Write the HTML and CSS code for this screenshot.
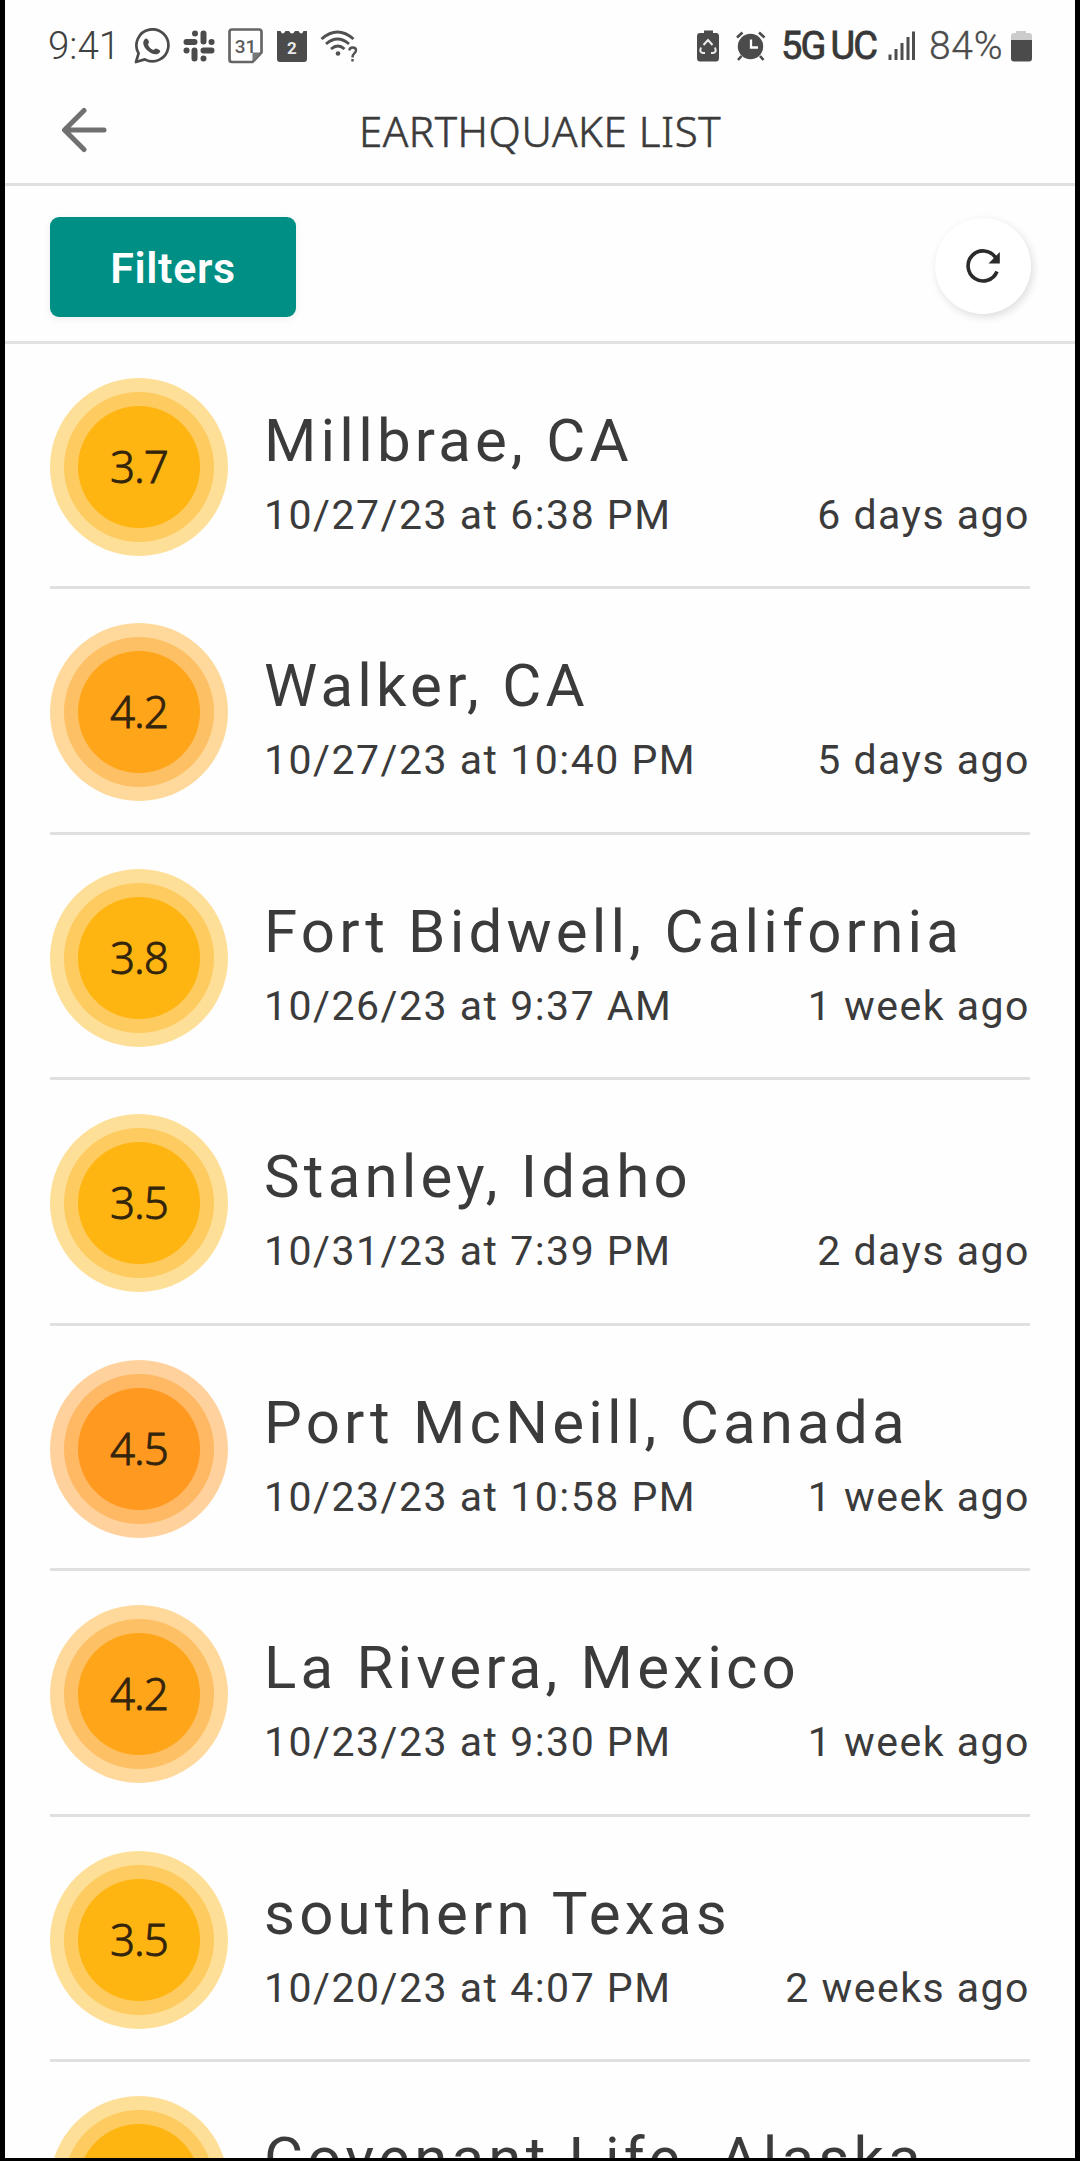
FILE: index.html
```html
<!DOCTYPE html>
<html lang="en">
<head>
<meta charset="utf-8">
<title>Earthquake List</title>
<link rel="stylesheet" href="styles.css">
</head>
<body>
<main class="screen">
  <div class="status">
    <div class="status-left">
      <span class="clock">9:41</span>
      <svg width="36" height="36" viewBox="134 28 36 36" fill="none" stroke="#4b4b4b" stroke-width="2.7"><path d="M136 62l2.6-8.6a16 16 0 1 1 6.2 6z" stroke-linejoin="round"/><path d="M144.500 39.500c1.500-2 3.500-1 4.500 2.500l-1 2.500c1 3 3 4.500 5.500 5.500l2-1.500c3 .5 5.500 2 4.500 3.500-2.500 4-8.500 2.500-12.500-1.500-4-3.500-5.500-8-3-11z" fill="#4b4b4b" stroke="none"/></svg>
      <svg width="32" height="32" viewBox="183 30 32 32" fill="none" stroke="#4b4b4b" stroke-width="6" stroke-linecap="round"><path d="M203.500 33.500v8M186.500 42h8M211.500 50.500h-8M194.500 50.500v8M195 33.500v.1M211.500 42h.1M186.500 50.500h.1M203.500 58.500v.1"/></svg>
      <svg width="35" height="36" viewBox="228 28 35 36"><path d="M232 29.500h27q2.500 0 2.500 2.500v20.500l-9 9.500h-20.500q-2.500 0-2.500-2.500V32q0-2.500 2.500-2.500z" fill="none" stroke="#666" stroke-width="2.700"/><path d="M261 52.500h-8.500v9.500" fill="#777"/><text x="245.500" y="53" class="cal-day">31</text></svg>
      <svg class="cal" width="30" height="32" viewBox="277 30 30 32"><path d="M277 31h3.500q2 5 5 0h3.500q3 5 6 0h3.500q3 5 5 0h3.500v28q0 3-3 3h-24q-3 0-3-3z" fill="#4b4b4b"/><text x="292" y="54" class="cal-number">2</text></svg>
      <svg width="38" height="34" viewBox="320 29 38 34" fill="none" stroke="#505050" stroke-width="2.900"><path d="M321.500 39q16-14 32 0M326 44q11.500-10 23 0M331 49q7-6 13.500 0"/><circle cx="338" cy="53.500" r="2.300" fill="#505050" stroke="none"/><path d="M349.500 50.500c0-4 6.500-4 6.500 0 0 3-3.500 2.500-3.500 7M352.500 59v2.500" stroke-width="2.400"/></svg>
    </div>
    <div class="status-right">
      <svg class="saver" width="22" height="32" viewBox="697 30 22 32"><path d="M704 30.500h9v2.500h3q3 0 3 3v22q0 3.500-3 3.500h-16q-3 0-3-3.500V36q0-3 3-3h4z" fill="#4b4b4b"/><path d="M703.500 45l4.500-5 4.500 5M701 47.500q-2 5 2 5.500h2M715 47.500q2 5-2 5.500h-2" fill="none" stroke="#eee" stroke-width="2"/></svg>
      <svg class="alarm" width="30" height="30" viewBox="736 31 30 30"><circle cx="750.500" cy="46.500" r="12.700" fill="#4b4b4b"/><path d="M737 37.500l5.500-5M764.500 37.500l-5.500-5M741.500 56l-3.500 4M760 56l3.500 4" stroke="#4b4b4b" stroke-width="2.600"/><path d="M751 39.500v8h7" fill="none" stroke="#fff" stroke-width="2.300"/></svg>
      <span class="network">5G<span class="uc">UC</span></span>
      <svg class="signal" width="27" height="30" viewBox="888 31 27 30" fill="#4e4e4e"><path d="M888.500 54.500h3v5.500h-3zM894.500 49h3v11h-3zM900.500 43h3v17h-3zM906.500 37h3v23h-3zM912 31.500h3V60h-3z"/></svg>
      <span class="percent">84%</span>
      <svg class="battery" width="21" height="32" viewBox="1011 30 21 32"><path d="M1011 41v-5q0-3 3-3h2v-2h10v2h3q3 0 3 3v5z" fill="#ccc"/><path d="M1011 40h21v18.500q0 3-3 3h-15q-3 0-3-3z" fill="#4b4b4b"/></svg>
    </div>
  </div>
  <header class="titlebar">
    <svg class="back" width="46" height="46" viewBox="61 107 46 46" fill="none" stroke="#707070" stroke-width="5" stroke-linecap="round" stroke-linejoin="round"><path d="M84 110.500L64.500 130 84 149.500M65 130h39"/></svg>
    <h1>EARTHQUAKE LIST</h1>
  </header>
  <div class="toolbar">
    <button class="filters">Filters</button>
    <button class="refresh" aria-label="Refresh"><svg width="36" height="36" viewBox="965 248 36 36"><path d="M994.500 257.500A15 15 0 1 0 996 271.500" fill="none" stroke="#2b2b2b" stroke-width="3.600"/><path d="M998.800 252v11.500H987.500z" fill="#2b2b2b"/></svg></button>
  </div>
  <ul class="list">
    <li><div class="mag m37"><b>3.7</b></div><div class="info"><h2>Millbrae, CA</h2><p><span>10/27/23 at 6:38 PM</span><span class="ago">6 days ago</span></p></div></li>
    <li><div class="mag m42"><b>4.2</b></div><div class="info"><h2>Walker, CA</h2><p><span>10/27/23 at 10:40 PM</span><span class="ago">5 days ago</span></p></div></li>
    <li><div class="mag m37"><b>3.8</b></div><div class="info"><h2>Fort Bidwell, California</h2><p><span>10/26/23 at 9:37 AM</span><span class="ago">1 week ago</span></p></div></li>
    <li><div class="mag m37"><b>3.5</b></div><div class="info"><h2>Stanley, Idaho</h2><p><span>10/31/23 at 7:39 PM</span><span class="ago">2 days ago</span></p></div></li>
    <li><div class="mag m45"><b>4.5</b></div><div class="info"><h2>Port McNeill, Canada</h2><p><span>10/23/23 at 10:58 PM</span><span class="ago">1 week ago</span></p></div></li>
    <li><div class="mag m42"><b>4.2</b></div><div class="info"><h2>La Rivera, Mexico</h2><p><span>10/23/23 at 9:30 PM</span><span class="ago">1 week ago</span></p></div></li>
    <li><div class="mag m37"><b>3.5</b></div><div class="info"><h2>southern Texas</h2><p><span>10/20/23 at 4:07 PM</span><span class="ago">2 weeks ago</span></p></div></li>
    <li><div class="mag m37"></div><div class="info"><h2>Covenant Life, Alaska</h2></div></li>
  </ul>
</main>
</body>
</html>
```
FILE: styles.css
```css
* { box-sizing: border-box; }
body { margin: 0; background: #000; font-family: Roboto, "Liberation Sans", sans-serif; color: #3b3b3b; }
h1, h2, p, ul { margin: 0; padding: 0; font-weight: 400; }
svg { display: block; flex: none; }
button { border: 0; padding: 0; font-family: inherit; }

.screen { height: 2161px; overflow: hidden; background: #fefefe; border: solid #000; border-width: 0 5px 3px; }

.status { height: 92px; padding: 0 43px 0 43px; display: flex; justify-content: space-between; align-items: center; color: #4b4b4b; }
.status-left { display: flex; align-items: center; gap: 13px; }
.status-right { display: flex; align-items: center; }
.clock { width: 73px; font-size: 38.5px; line-height: 46px; font-weight: 300; white-space: nowrap; color: #404040; }
.cal { margin-left: 1px; }
.cal-day { font: 500 19px Roboto, sans-serif; fill: #5b5b5b; text-anchor: middle; }
.cal-number { font: 700 17px Roboto, sans-serif; fill: #e8e8e8; text-anchor: middle; }
.alarm { margin-left: 17px; }
.network { width: 107px; margin-left: 15px; font: 400 38px/46px Roboto, sans-serif; -webkit-text-stroke: .8px; letter-spacing: -1.9px; white-space: nowrap; color: #383838; }
.uc { margin-left: 6px; }
.percent { width: 82px; margin-left: 14px; font-size: 39px; line-height: 46px; font-weight: 300; letter-spacing: .7px; -webkit-text-stroke: .3px; white-space: nowrap; }

.titlebar { height: 94px; display: grid; grid-template-columns: 102px 1fr 102px; align-items: center; border-bottom: 3px solid #e0e0e0; }
.back { margin: -15px 0 0 56px; }
.titlebar h1 { margin: -13px 0 0; text-align: center; font: 300 42px/60px "Noto Sans", sans-serif; letter-spacing: .6px; -webkit-text-stroke: .6px; white-space: nowrap; }

.toolbar { height: 158px; padding: 4px 44px 0 45px; display: flex; justify-content: space-between; align-items: center; border-bottom: 3px solid #e2e2e2; }
.filters { width: 246px; height: 100px; margin-top: 2px; padding-top: 3px; border-radius: 9px; background: #008f84; color: #fff; font-size: 43px; font-weight: 600; letter-spacing: .6px; box-shadow: 0 2px 8px #0001; }
.refresh { width: 96px; height: 96px; padding-left: 1px; border-radius: 50%; background: #fff; box-shadow: 2px 3px 8px #0002; display: grid; place-items: center; }

.list { list-style: none; padding: 0 45px; }
.list li { height: 245.45px; padding-top: 34px; display: flex; border-bottom: 3px solid #e0e0e0; }
.mag { flex: none; width: 178px; height: 178px; border-radius: 50%; display: grid; place-items: center; background: radial-gradient(circle, var(--core) 60.5px, var(--mid) 61.5px 74.5px, var(--outer) 75.5px); }
.mag b { font: 300 44px/60px "Noto Sans", sans-serif; letter-spacing: -1px; -webkit-text-stroke: .8px; margin-top: -2px; color: #33240c; }
.m37 { --core: #ffb511; --mid: #fecb60; --outer: #fedf98; }
.m42 { --core: #ffa519; --mid: #fec065; --outer: #fed99b; }
.m45 { --core: #ff9920; --mid: #ffb965; --outer: #ffd29d; }
.info { flex: 1; min-width: 0; margin-left: 36px; padding-top: 27px; white-space: nowrap; }
.info h2 { font-size: 60px; line-height: 72px; letter-spacing: 4.2px; }
.info p { display: flex; justify-content: space-between; font-size: 41px; line-height: 48px; letter-spacing: 1.5px; margin-top: 14px; }
```
